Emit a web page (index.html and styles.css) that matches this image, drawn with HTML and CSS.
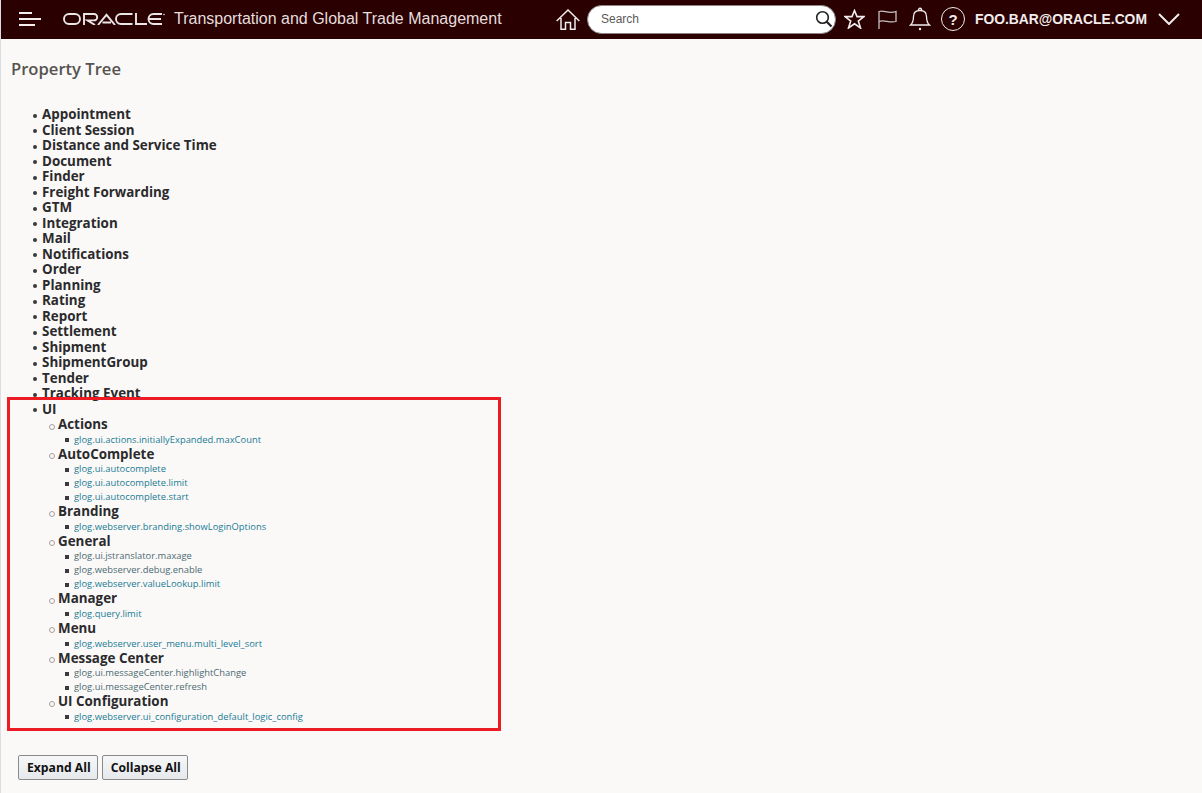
FILE: index.html
```html
<!DOCTYPE html>
<html lang="en">
<head>
<meta charset="utf-8">
<title>Property Tree</title>
<link rel="stylesheet" href="styles.css">
</head>
<body>
<header class="topbar">
  <button class="icon-btn menu" aria-label="Menu">
    <svg width="22" height="14" viewBox="0 0 22 14"><path d="M0 1H13M0 7H22M0 13H16" stroke="#f4eeee" stroke-width="2" fill="none"/></svg>
  </button>
  <svg class="logo" width="102" height="12" viewBox="0 0 102 12" aria-label="Oracle logo">
    <g fill="none" stroke="#ebe6e6" stroke-width="1.900">
      <rect x="1" y="1" width="16" height="10" rx="5"/>
      <path d="M21 12V1H31A3.200 3.200 0 0 1 31 7.400H24.500L32 12"/>
      <path d="M35 12L43.500 1.800 52 12M39.500 9.500H48"/>
      <path d="M69.500 1H58A5 5 0 0 0 58 11H69.500"/>
      <path d="M73 0V11H84"/>
      <path d="M99 1H90.500A5 5 0 0 0 90.500 11H99M86.500 6H98"/>
    </g>
    <circle cx="101" cy="1.500" r="0.800" fill="#ebe6e6"/>
  </svg>
  <span class="product">Transportation and Global Trade Management</span>
  <svg class="nav-icon home" width="24" height="21" viewBox="0 0 24 21"><path d="M.7 12L12 1 23.300 12M5 9V20.300H9.500V13.500H14.500V20.300H19V9" fill="none" stroke="#f2eded" stroke-width="1.500"/></svg>
  <div class="search">
    <span class="search-label">Search</span>
    <svg width="18" height="18" viewBox="0 0 18 18"><circle cx="7.500" cy="7.500" r="5.800" fill="none" stroke="#222" stroke-width="1.600"/><path d="M11.500 11.500L16.500 16.500" stroke="#222" stroke-width="2.200"/></svg>
  </div>
  <svg class="nav-icon star" width="21" height="20" viewBox="0 0 21 20"><path d="M10.500 1.500L13 7.600H20L14.300 12 16.500 19 10.500 14.800 4.500 19 6.700 12 1 7.600H8Z" fill="none" stroke="#f2eded" stroke-width="1.600"/></svg>
  <svg class="nav-icon flag" width="19" height="19" viewBox="0 0 19 19"><path d="M1 19V1.500C6 -.5 10 4.500 18 1.500V11.500C11 13.500 6 9 1 11.500" fill="none" stroke="#c8c0c0" stroke-width="1.300"/></svg>
  <svg class="nav-icon bell" width="22" height="24" viewBox="0 0 22 24"><path d="M1.500 18C4.500 15.500 4.500 12.500 4.500 9.500C4.500 5.500 7 3.500 11 3.500S17.500 5.500 17.500 9.500C17.500 12.500 17.500 15.500 20.500 18ZM9.300 3.500C9.300 .5 12.700 .5 12.700 3.500" fill="none" stroke="#f2eded" stroke-width="1.300"/><circle cx="11" cy="22" r="1.200" fill="#f2eded"/></svg>
  <span class="help">?</span>
  <span class="user">FOO.BAR@ORACLE.COM</span>
  <svg class="nav-icon chevron" width="22" height="12" viewBox="0 0 22 12"><path d="M1 1L11 11 21 1" fill="none" stroke="#f2eded" stroke-width="2"/></svg>
</header>

<main class="content">
  <h1 class="page-title">Property Tree</h1>
  <ul class="tree">
    <li>Appointment</li>
    <li>Client Session</li>
    <li>Distance and Service Time</li>
    <li>Document</li>
    <li>Finder</li>
    <li>Freight Forwarding</li>
    <li>GTM</li>
    <li>Integration</li>
    <li>Mail</li>
    <li>Notifications</li>
    <li>Order</li>
    <li>Planning</li>
    <li>Rating</li>
    <li>Report</li>
    <li>Settlement</li>
    <li>Shipment</li>
    <li>ShipmentGroup</li>
    <li>Tender</li>
    <li>Tracking Event</li>
    <li>UI
      <ul>
        <li>Actions
          <ul>
            <li><a href="#">glog.ui.actions.initiallyExpanded.maxCount</a></li>
          </ul>
        </li>
        <li>AutoComplete
          <ul>
            <li><a href="#">glog.ui.autocomplete</a></li>
            <li><a href="#">glog.ui.autocomplete.limit</a></li>
            <li><a href="#">glog.ui.autocomplete.start</a></li>
          </ul>
        </li>
        <li>Branding
          <ul>
            <li><a href="#">glog.webserver.branding.showLoginOptions</a></li>
          </ul>
        </li>
        <li>General
          <ul>
            <li><a class="muted" href="#">glog.ui.jstranslator.maxage</a></li>
            <li><a class="muted" href="#">glog.webserver.debug.enable</a></li>
            <li><a href="#">glog.webserver.valueLookup.limit</a></li>
          </ul>
        </li>
        <li>Manager
          <ul>
            <li><a href="#">glog.query.limit</a></li>
          </ul>
        </li>
        <li>Menu
          <ul>
            <li><a href="#">glog.webserver.user_menu.multi_level_sort</a></li>
          </ul>
        </li>
        <li>Message Center
          <ul>
            <li><a class="muted" href="#">glog.ui.messageCenter.highlightChange</a></li>
            <li><a class="muted" href="#">glog.ui.messageCenter.refresh</a></li>
          </ul>
        </li>
        <li>UI Configuration
          <ul>
            <li><a href="#">glog.webserver.ui_configuration_default_logic_config</a></li>
          </ul>
        </li>
      </ul>
    </li>
  </ul>
  <div class="actions">
    <button class="btn">Expand All</button>
    <button class="btn">Collapse All</button>
  </div>
  <div class="highlight"></div>
</main>
</body>
</html>
```
FILE: styles.css
```css
* { box-sizing: border-box; }
html, body { margin: 0; height: 100%; }
body {
  background: #faf9f8;
  border-left: 1px solid #dcdce4;
  font-family: "Open Sans", "Noto Sans", sans-serif;
  overflow: hidden;
}
.topbar {
  height: 39px;
  margin-left: -1px;
  padding-bottom: 1px;
  background: #2a0000;
  display: flex;
  align-items: center;
  color: #f0ecec;
}
.icon-btn { background: none; border: 0; padding: 0; display: flex; }
.menu { margin-left: 19px; }
.logo { margin-left: 22px; }
.product {
  margin-left: 9px;
  font: 16px "Liberation Sans", Arial, sans-serif;
  color: #e4dede;
  white-space: nowrap;
  width: 382px;
}
.nav-icon { flex: none; display: block; }
.search {
  width: 249px;
  height: 29px;
  margin-left: 7px;
  padding: 0 2px 0 13px;
  background: #fff;
  border: 1px solid #8c8484;
  border-radius: 15px;
  display: flex;
  align-items: center;
  justify-content: space-between;
  font: 12px "Liberation Sans", Arial, sans-serif;
  color: #5a5a5a;
}
.star { margin-left: 8px; }
.flag { margin-left: 13px; }
.bell { margin-left: 12px; }
.help {
  margin-left: 10px;
  width: 24px;
  height: 24px;
  border: 1.500px solid #f2eded;
  border-radius: 50%;
  display: flex;
  align-items: center;
  justify-content: center;
  font: bold 15px "Liberation Sans", Arial, sans-serif;
}
.user {
  margin-left: 10px;
  font: bold 13.850px "Liberation Sans", Arial, sans-serif;
  color: #f2eded;
  white-space: nowrap;
}
.chevron { margin-left: 11px; }
.content { position: relative; padding: 20px 0 0 10px; }
.page-title {
  margin: 0;
  font-size: 16.600px;
  line-height: 20px;
  font-weight: 600;
  color: #565350;
}
.tree, .tree ul { list-style: none; }
.tree {
  margin: 28px 0 0;
  padding: 0 0 0 31px;
  font-size: 13.400px;
  line-height: 15.500px;
  font-weight: 700;
  color: #2b2a2c;
}
.tree li { position: relative; }
.tree li::before {
  content: "";
  position: absolute;
  left: -9px;
  top: 6.500px;
  width: 4px;
  height: 4px;
  border-radius: 50%;
  background: #3a3a3c;
}
.tree ul {
  margin: 0;
  padding-left: 16px;
}
.tree ul li::before {
  background: none;
  border: 1px solid #a8a09c;
}
.tree ul ul {
  margin-top: 0.100px;
  font-size: 9.400px;
  line-height: 14px;
  font-weight: 400;
}
.tree ul ul li::before {
  top: 5.500px;
  border: 0;
  border-radius: 0;
  background: #3a3a3c;
}
.tree a { color: #1b7b94; text-decoration: none; }
.tree a.muted { color: #4d6a72; }
.actions { display: flex; gap: 4px; margin-top: 31px; margin-left: 7px; }
.btn {
  height: 25px;
  padding: 1px 6px 0 8px;
  background: linear-gradient(#f5f7f8, #e6e9ec);
  border: 1px solid #8a8a8a;
  border-radius: 2px;
  font: 700 12.200px "Open Sans", sans-serif;
  color: #111;
}
.highlight {
  position: absolute;
  left: 6px;
  top: 358px;
  width: 494px;
  height: 334px;
  border: 3px solid #ed1c24;
  pointer-events: none;
}
```
